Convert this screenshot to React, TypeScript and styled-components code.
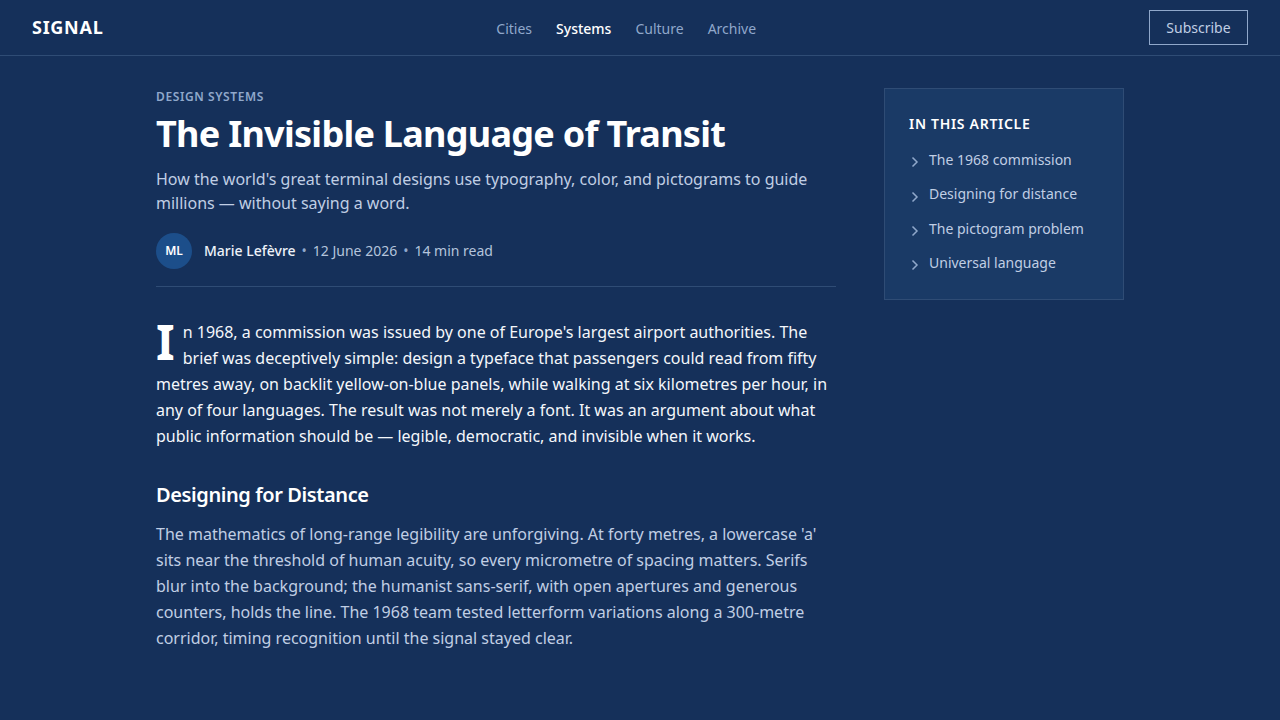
import React from "react";
import styled, { createGlobalStyle } from "styled-components";

const GlobalStyle = createGlobalStyle`
  html, body {
    margin: 0;
    padding: 0;
    background-color: #15305a;
    font-family: "Noto Sans", sans-serif;
  }
  * {
    box-sizing: border-box;
  }
`;

const Page = styled.div`
  min-height: 720px;
  background-color: #15305a;
`;

const Header = styled.header`
  height: 56px;
  padding: 0 32px;
  display: flex;
  align-items: center;
  justify-content: space-between;
  border-bottom: 1px solid #2f4c75;
`;

const Logo = styled.div`
  font-size: 18px;
  font-weight: 700;
  letter-spacing: 0.72px;
  color: #ffffff;
  padding-bottom: 1px;
`;

const Nav = styled.nav`
  display: flex;
  gap: 24px;
  padding-top: 2px;
`;

const NavLink = styled.a<{ $active?: boolean }>`
  font-size: 14px;
  color: ${(p) => (p.$active ? "#ffffff" : "#90a8cb")};
  font-weight: ${(p) => (p.$active ? 500 : 400)};
`;

const SubscribeButton = styled.button`
  height: 35px;
  width: 99px;
  padding: 0;
  background: transparent;
  border: 1px solid #90a8cb;
  font-family: inherit;
  font-size: 14px;
  color: #c0cee4;
`;

const Main = styled.main`
  width: 968px;
  margin: 0 auto;
  padding-top: 32px;
  display: flex;
  gap: 48px;
  align-items: flex-start;
`;

const Article = styled.article`
  width: 680px;
`;

const Eyebrow = styled.div`
  font-size: 12px;
  font-weight: 600;
  letter-spacing: 0.6px;
  line-height: 18px;
  color: #90a8cb;
`;

const Title = styled.h1`
  margin: 5px 0 11px;
  font-size: 36px;
  line-height: 45px;
  font-weight: 700;
  letter-spacing: -0.72px;
  color: #ffffff;
`;

const Deck = styled.p`
  margin: 0 0 18px;
  font-size: 16px;
  line-height: 24px;
  color: #c0cee4;
`;

const Byline = styled.div`
  display: flex;
  align-items: center;
  padding-bottom: 17px;
  border-bottom: 1px solid #2f4c75;
  margin-bottom: 32px;
  font-size: 14px;
  line-height: 18px;
  color: #b4c4dc;
`;

const Avatar = styled.div`
  width: 36px;
  height: 36px;
  border-radius: 50%;
  margin-right: 12px;
  background-color: #1c4e8a;
  color: #ffffff;
  font-size: 12px;
  font-weight: 600;
  display: flex;
  align-items: center;
  justify-content: center;
`;

const Author = styled.span`
  color: #edf2f9;
  font-weight: 500;
`;

const Dot = styled.span`
  margin: 0 6px;
  color: #90a8cb;
`;

const Lead = styled.p`
  margin: 0 0 32px;
  font-size: 16px;
  line-height: 26px;
  color: #f4f7fb;

  &::first-letter {
    float: left;
    font-size: 48px;
    line-height: 44px;
    font-weight: 700;
    margin-right: 8px;
    margin-top: 1px;
    color: #ffffff;
  }
`;

const SectionHeading = styled.h2`
  margin: 0 0 12px;
  font-size: 20px;
  line-height: 28px;
  font-weight: 600;
  letter-spacing: -0.4px;
  color: #ffffff;
`;

const Body = styled.p`
  margin: 0;
  font-size: 16px;
  line-height: 26px;
  color: #c0cee4;
`;

const Sidebar = styled.aside`
  width: 240px;
  padding: 24px;
  background-color: #1a3a66;
  border: 1px solid #2f4c75;
`;

const SidebarTitle = styled.h3`
  margin: 0 0 13.6px;
  font-size: 14px;
  line-height: 22.4px;
  font-weight: 600;
  letter-spacing: 0.7px;
  color: #ffffff;
`;

const TocList = styled.ul`
  list-style: none;
  margin: 0;
  padding: 0;
  display: flex;
  flex-direction: column;
  gap: 12px;
`;

const TocItem = styled.li`
  display: flex;
  align-items: center;
  gap: 8px;
  font-size: 14px;
  line-height: 22.4px;
  color: #c0cee4;
`;

const ChevronIcon = styled.svg`
  width: 12px;
  height: 12px;
  margin-top: 4px;
  fill: none;
  stroke: #90a8cb;
  stroke-width: 1.5;
`;

const Chevron = () => (
  <ChevronIcon viewBox="0 0 12 12">
    <path d="M3.5 1.5l4.5 4.5-4.5 4.5" />
  </ChevronIcon>
);

const navItems = ["Cities", "Systems", "Culture", "Archive"];
const tocItems = [
  "The 1968 commission",
  "Designing for distance",
  "The pictogram problem",
  "Universal language",
];

const App: React.FC = () => {
  return (
    <Page>
      <GlobalStyle />
      <Header>
        <Logo>SIGNAL</Logo>
        <Nav>
          {navItems.map((item) => (
            <NavLink key={item} $active={item === "Systems"}>
              {item}
            </NavLink>
          ))}
        </Nav>
        <SubscribeButton>Subscribe</SubscribeButton>
      </Header>
      <Main>
        <Article>
          <Eyebrow>DESIGN SYSTEMS</Eyebrow>
          <Title>The Invisible Language of Transit</Title>
          <Deck>
            How the world's great terminal designs use typography, color, and pictograms to guide
            millions — without saying a word.
          </Deck>
          <Byline>
            <Avatar>ML</Avatar>
            <Author>Marie Lefèvre</Author>
            <Dot>•</Dot>
            <span>12 June 2026</span>
            <Dot>•</Dot>
            <span>14 min read</span>
          </Byline>
          <Lead>
            In 1968, a commission was issued by one of Europe's largest airport authorities. The
            brief was deceptively simple: design a typeface that passengers could read from fifty
            metres away, on backlit yellow-on-blue panels, while walking at six kilometres per hour,
            in any of four languages. The result was not merely a font. It was an argument about
            what public information should be — legible, democratic, and invisible when it works.
          </Lead>
          <SectionHeading>Designing for Distance</SectionHeading>
          <Body>
            The mathematics of long-range legibility are unforgiving. At forty metres, a lowercase
            'a' sits near the threshold of human acuity, so every micrometre of spacing matters.
            Serifs blur into the background; the humanist sans-serif, with open apertures and
            generous counters, holds the line. The 1968 team tested letterform variations along a
            300-metre corridor, timing recognition until the signal stayed clear.
          </Body>
        </Article>
        <Sidebar>
          <SidebarTitle>IN THIS ARTICLE</SidebarTitle>
          <TocList>
            {tocItems.map((item) => (
              <TocItem key={item}>
                <Chevron />
                {item}
              </TocItem>
            ))}
          </TocList>
        </Sidebar>
      </Main>
    </Page>
  );
};

export default App;
